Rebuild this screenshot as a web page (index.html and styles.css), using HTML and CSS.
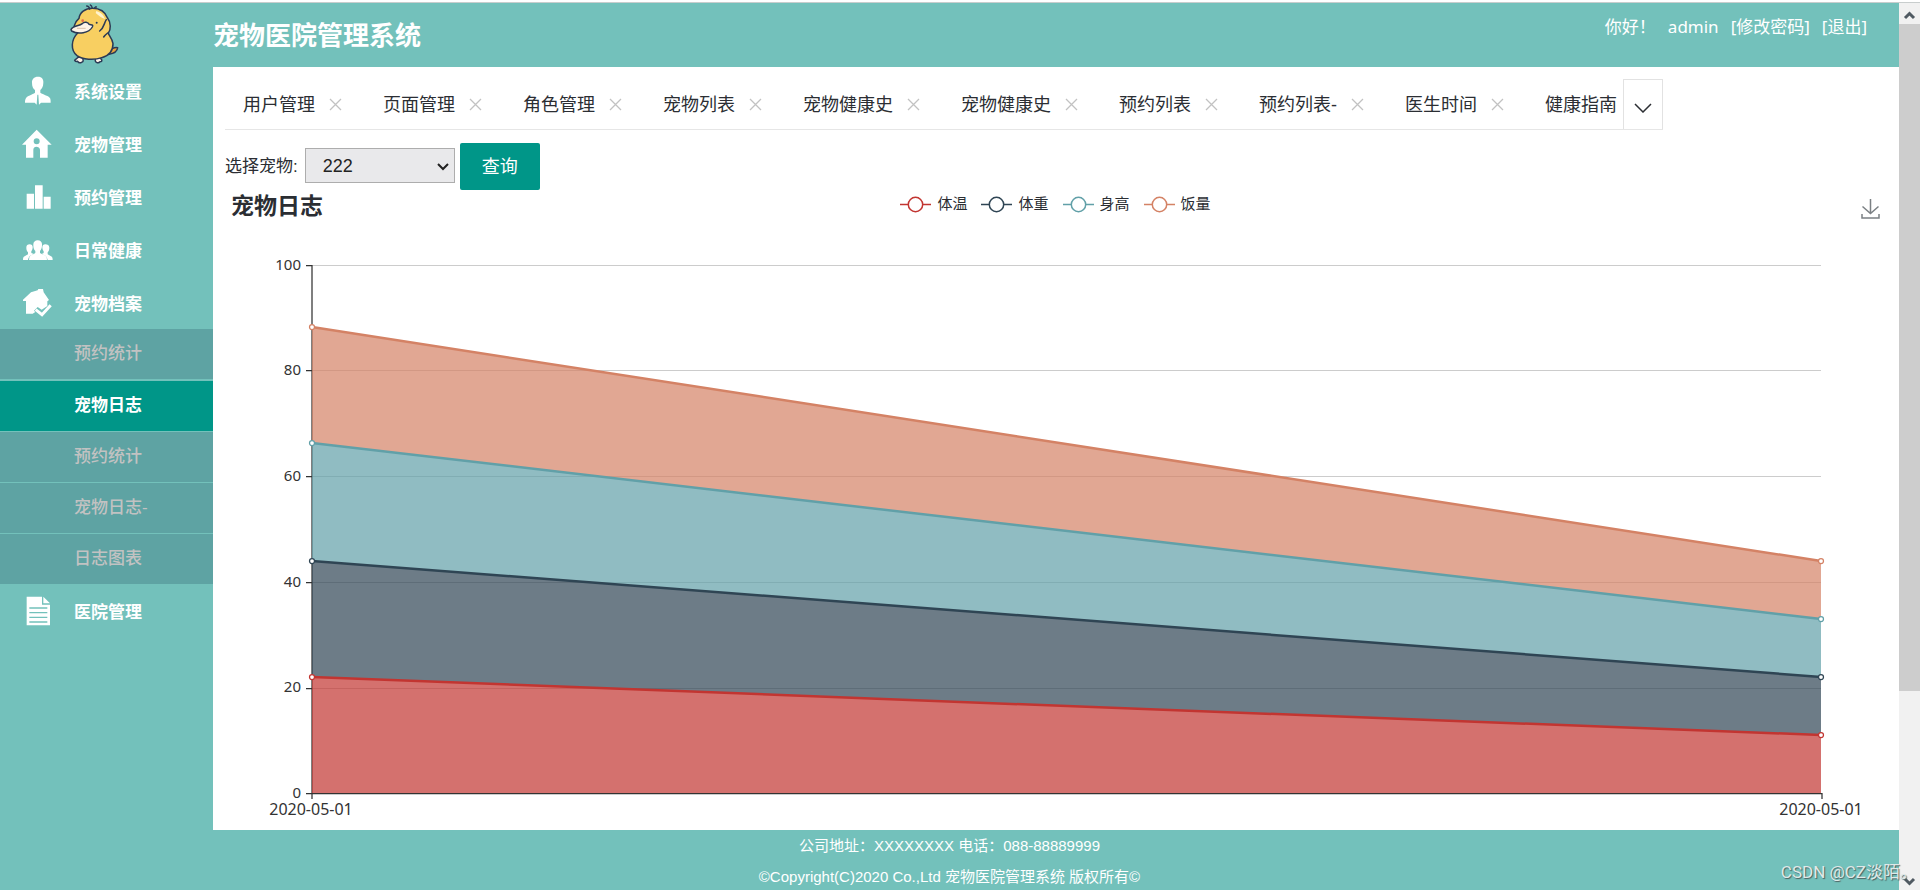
FILE: index.html
```html
<!DOCTYPE html>
<html lang="zh-CN">
<head>
<meta charset="utf-8">
<title>宠物医院管理系统</title>
<link rel="stylesheet" href="styles.css">
</head>
<body>
<div class="window">
  <div class="page">
    <div class="frame">
      <aside class="sidebar">
        <div class="logo">
          <svg viewBox="30 8 156 186" width="52" height="62" aria-label="logo">
            <g stroke="#2b3a55" stroke-width="4.500" stroke-linejoin="round" stroke-linecap="round">
              <path d="M146 154 Q162 140 176 142 Q174 158 150 162 Z" fill="#e8a33c"/>
              <path d="M66 168 Q56 170 47 180 Q50 185 56 183 Q60 190 68 186 Q76 184 70 172 Z" fill="#fff3e6"/>
              <path d="M110 174 Q106 184 114 187 Q120 189 123 184 Q130 184 128 178 Q122 170 114 170 Z" fill="#fff3e6"/>
              <path d="M56 98 C36 118 34 150 54 166 C70 178 106 180 128 172 C150 166 162 150 162 130 C160 114 148 104 148 98 C156 88 156 66 146 54 C138 32 118 24 100 24 C78 24 62 36 60 54 C46 66 42 84 48 92" fill="#f8cf61"/>
              <path d="M92 26 Q90 17 83 17 M100 24 Q98 15 94 14 M106 24 Q110 18 112 20" fill="none"/>
              <path d="M36 88 C40 76 60 78 70 70 C76 62 88 66 90 72 C98 74 104 72 100 80 C90 98 58 104 38 92 Z" fill="#fff3e6"/>
              <path d="M142 58 C134 70 136 82 122 92 M146 98 Q138 104 134 110" fill="none"/>
            </g>
            <path d="M112 32 Q132 38 138 56 Q128 54 110 38 Z" fill="#fff3cf"/>
            <circle cx="71" cy="61" r="4" fill="#e36b4a"/>
            <circle cx="113" cy="67" r="3" fill="#2b3a55"/>
            <path d="M54 84 L80 84" stroke="#c9a98c" stroke-width="2"/>
          </svg>
        </div>
        <nav class="menu">
          <a class="menu-item" href="#">
            <svg class="menu-icon" viewBox="0 0 90 90"><path fill="#fff" d="M48 2c12 0 17 8 16 18 0 12-5 18-9 22v8c8 6 27 9 30 18 1 4 1 8 1 12H57l-6 6-2-30h-3l-2 30-6-6H9c0-4 0-8 2-12 3-9 21-12 28-18v-8c-5-4-9-10-9-22C29 10 36 2 48 2z"/></svg>
            <span>系统设置</span>
          </a>
          <a class="menu-item" href="#">
            <svg class="menu-icon" viewBox="0 0 90 90"><path fill="#fff" fill-rule="evenodd" d="M44 2L0 47h12v39h22V62c0-6 4-9 9-9s11 3 11 9v24h23V47h12zM44 28a9 9 0 1 1 0 18 9 9 0 0 1 0-18z"/></svg>
            <span>宠物管理</span>
          </a>
          <a class="menu-item" href="#">
            <svg class="menu-icon" viewBox="0 0 90 90"><path fill="#fff" d="M14 35h22v45H14zM39 10h23v70H39zM65 44h21v36H65z"/></svg>
            <span>预约管理</span>
          </a>
          <a class="menu-item" href="#">
            <svg class="menu-icon" viewBox="0 0 90 90"><g fill="#fff"><path d="M47 16c9 0 14 6 13 15 0 9-3 13-6 17v6c6 4 18 6 20 13l1 8H21l1-8c2-7 13-9 18-13v-6c-4-4-6-8-6-17-1-9 5-15 13-15z"/><path d="M23 28c6 0 9 4 9 9 0 6-2 10-4 12v5l8 3c-10 4-16 7-18 18H3c0-6 1-9 5-11l10-6v-6c-3-3-5-7-5-14s4-10 10-10zM70 28c-6 0-9 4-9 9 0 6 2 10 4 12v5l-6 3c10 4 16 7 18 18h15c0-6-1-9-5-11l-10-6v-6c3-3 5-7 5-14s-6-10-12-10z"/></g></svg>
            <span>日常健康</span>
          </a>
          <a class="menu-item" href="#">
            <svg class="menu-icon" viewBox="0 0 90 90"><path fill="#fff" d="M3 35l24-22 20-6 2-4h14l2 10 16 23-5 4v14L59 65l-12-8-11 11 4 4-8 5H12V39H3z"/><path fill="none" stroke="#fff" stroke-width="9" d="M41 65l19 15 26-28"/></svg>
            <span>宠物档案</span>
          </a>
          <div class="submenu">
            <a class="sub-item" href="#">预约统计</a>
            <a class="sub-item active" href="#">宠物日志</a>
            <a class="sub-item" href="#">预约统计</a>
            <a class="sub-item" href="#">宠物日志-</a>
            <a class="sub-item" href="#">日志图表</a>
          </div>
          <a class="menu-item" href="#">
            <svg class="menu-icon" viewBox="0 0 90 90"><path fill="#fff" d="M14 2h46v24h24v62H14zM64 2l20 20H64z"/><path stroke="#73c1bb" stroke-width="4" d="M22 36h54M22 50h54M22 64h54M22 78h54"/></svg>
            <span>医院管理</span>
          </a>
        </nav>
      </aside>
      <div class="main">
        <header class="topbar">
          <h1>宠物医院管理系统</h1>
          <div class="user">
            <span class="hello">你好！</span>
            <span>admin</span>
            <a href="#">[修改密码]</a>
            <a href="#">[退出]</a>
          </div>
        </header>
        <main class="content">
          <div class="tabs">
            <ul class="tab-list">
              <li class="tab">用户管理<button class="close" aria-label="关闭"><svg viewBox="0 0 13 13"><path d="M1 1l11 11M12 1L1 12"/></svg></button></li>
              <li class="tab">页面管理<button class="close" aria-label="关闭"><svg viewBox="0 0 13 13"><path d="M1 1l11 11M12 1L1 12"/></svg></button></li>
              <li class="tab">角色管理<button class="close" aria-label="关闭"><svg viewBox="0 0 13 13"><path d="M1 1l11 11M12 1L1 12"/></svg></button></li>
              <li class="tab">宠物列表<button class="close" aria-label="关闭"><svg viewBox="0 0 13 13"><path d="M1 1l11 11M12 1L1 12"/></svg></button></li>
              <li class="tab">宠物健康史<button class="close" aria-label="关闭"><svg viewBox="0 0 13 13"><path d="M1 1l11 11M12 1L1 12"/></svg></button></li>
              <li class="tab">宠物健康史<button class="close" aria-label="关闭"><svg viewBox="0 0 13 13"><path d="M1 1l11 11M12 1L1 12"/></svg></button></li>
              <li class="tab">预约列表<button class="close" aria-label="关闭"><svg viewBox="0 0 13 13"><path d="M1 1l11 11M12 1L1 12"/></svg></button></li>
              <li class="tab">预约列表-<button class="close" aria-label="关闭"><svg viewBox="0 0 13 13"><path d="M1 1l11 11M12 1L1 12"/></svg></button></li>
              <li class="tab">医生时间<button class="close" aria-label="关闭"><svg viewBox="0 0 13 13"><path d="M1 1l11 11M12 1L1 12"/></svg></button></li>
              <li class="tab">健康指南</li>
            </ul>
            <button class="more" aria-label="更多"><svg viewBox="0 0 18 10" width="18" height="10"><path d="M1 1l8 8 8-8" fill="none" stroke="#2b2e33" stroke-width="1.500"/></svg></button>
          </div>
          <form class="filter">
            <label for="pet">选择宠物:</label>
            <span class="select-wrap">
              <select id="pet"><option>222</option></select>
              <svg class="caret" viewBox="0 0 12 8" width="12" height="8"><path d="M1 1l5 5 5-5" fill="none" stroke="#222" stroke-width="2"/></svg>
            </span>
            <button type="button" class="query">查询</button>
          </form>
          <section class="chart">
            <div class="chart-head">
              <h2>宠物日志</h2>
              <ul class="legend">
                <li><svg viewBox="0 0 31 17"><path d="M0 8.500h8M23 8.500h8" stroke="#c23531"/><circle cx="15.500" cy="8.500" r="7.200" stroke="#c23531"/></svg>体温</li>
                <li><svg viewBox="0 0 31 17"><path d="M0 8.500h8M23 8.500h8" stroke="#2f4554"/><circle cx="15.500" cy="8.500" r="7.200" stroke="#2f4554"/></svg>体重</li>
                <li><svg viewBox="0 0 31 17"><path d="M0 8.500h8M23 8.500h8" stroke="#61a0a8"/><circle cx="15.500" cy="8.500" r="7.200" stroke="#61a0a8"/></svg>身高</li>
                <li><svg viewBox="0 0 31 17"><path d="M0 8.500h8M23 8.500h8" stroke="#d48265"/><circle cx="15.500" cy="8.500" r="7.200" stroke="#d48265"/></svg>饭量</li>
              </ul>
              <button class="save" aria-label="保存为图片"><svg viewBox="0 0 19 20" width="19" height="20"><path d="M9.500 0v14M1.500 7.500l8 7 8-7M1 15v4h17v-4" fill="none" stroke="#7b8084" stroke-width="1.500"/></svg></button>
            </div>
            <svg class="plot" viewBox="0 0 1664 608">
              <g stroke="#ccc">
                <path d="M87 43.500H1596M87 148.500H1596M87 254.500H1596M87 360.500H1596M87 466.500H1596"/>
              </g>
              <g stroke="#333" stroke-width="1.250">
                <path d="M87 43V572M81 43.500h6M81 148.500h6M81 254.500h6M81 360.500h6M81 466.500h6M81 571.500H1597M87 571v6M1597 571v6"/>
              </g>
              <g fill-opacity=".7">
                <path fill="#c23531" d="M87 455L1596 513V571H87z"/>
                <path fill="#2f4554" d="M87 339L1596 455V513L87 455z"/>
                <path fill="#61a0a8" d="M87 221L1596 397V455L87 339z"/>
                <path fill="#d48265" d="M87 105L1596 339V397L87 221z"/>
              </g>
              <g fill="none" stroke-width="2.500">
                <path stroke="#c23531" d="M87 455L1596 513"/>
                <path stroke="#2f4554" d="M87 339L1596 455"/>
                <path stroke="#61a0a8" d="M87 221L1596 397"/>
                <path stroke="#d48265" d="M87 105L1596 339"/>
              </g>
              <g fill="#fff" stroke-width="1.250">
                <g stroke="#c23531"><circle cx="87" cy="455" r="2.500"/><circle cx="1596" cy="513" r="2.500"/></g>
                <g stroke="#2f4554"><circle cx="87" cy="339" r="2.500"/><circle cx="1596" cy="455" r="2.500"/></g>
                <g stroke="#61a0a8"><circle cx="87" cy="221" r="2.500"/><circle cx="1596" cy="397" r="2.500"/></g>
                <g stroke="#d48265"><circle cx="87" cy="105" r="2.500"/><circle cx="1596" cy="339" r="2.500"/></g>
              </g>
              <g class="axis" text-anchor="end">
                <text x="76" y="48">100</text>
                <text x="76" y="153">80</text>
                <text x="76" y="259">60</text>
                <text x="76" y="365">40</text>
                <text x="76" y="470">20</text>
                <text x="76" y="576">0</text>
              </g>
              <g class="axis dates" text-anchor="middle">
                <text x="86" y="593">2020-05-01</text>
                <text x="1596" y="593">2020-05-01</text>
              </g>
            </svg>
          </section>
        </main>
      </div>
    </div>
    <footer class="footer">
      <p>公司地址：XXXXXXXX 电话：088-88889999</p>
      <p>©Copyright(C)2020 Co.,Ltd 宠物医院管理系统 版权所有©</p>
    </footer>
  </div>
  <div class="scrollbar">
    <svg class="arrow" viewBox="0 0 21 21"><path d="M6 15l4.500-4.500L15 15" fill="none" stroke="#505a62" stroke-width="3"/></svg>
    <div class="thumb"></div>
    <svg class="arrow" viewBox="0 0 21 21"><path d="M6 8l4.500 4.500L15 8" fill="none" stroke="#505a62" stroke-width="3"/></svg>
  </div>
  <div class="watermark">CSDN @CZ淡陌。</div>
</div>
</body>
</html>
```
FILE: styles.css
```css
* { box-sizing: border-box; }
body, h1, h2, p, ul { margin: 0; padding: 0; }
ul { list-style: none; }
body {
  font-family: "Liberation Sans", "Noto Sans CJK SC", sans-serif;
  color: #2b2e33;
  background: #fff;
}
button { font: inherit; padding: 0; border: 0; background: none; cursor: pointer; }
a { color: inherit; text-decoration: none; }
svg { display: block; }

.window {
  position: relative;
  display: flex;
  min-height: 100vh;
  padding-top: 2px;
  background: #fff;
  overflow: hidden;
}
.page {
  flex: 1;
  min-width: 0;
  display: flex;
  flex-direction: column;
  background: #73c1bb;
  border-top: 1px solid #c8cdcd;
}
.frame { display: flex; }
.sidebar { flex: 0 0 213px; }
.logo { height: 61px; padding-left: 69px; }
.menu { color: #fff; font-size: 17px; }
.menu-item {
  display: flex;
  align-items: center;
  gap: 22px;
  height: 53px;
  padding-left: 22px;
  font-weight: 700;
}
.menu-item span { padding-bottom: 1px; }
.menu-icon { width: 30px; height: 30px; overflow: visible; }
.submenu { background: #5ea3a3; color: #c2c2c2; }
.sub-item {
  display: block;
  line-height: 50px;
  padding-left: 74px;
  border-bottom: 1px solid #73c1bb;
  font-weight: 500;
}
.sub-item:first-child { border-bottom-width: 2px; }
.sub-item:last-child { border-bottom: 0; }
.sub-item.active { background: #009688; color: #fff; font-weight: 700; }

.main { flex: 1; min-width: 0; display: flex; flex-direction: column; }
.topbar {
  display: flex;
  justify-content: space-between;
  align-items: flex-start;
  height: 64px;
  padding-right: 32px;
  color: #fff;
}
.topbar h1 { font-size: 26px; line-height: 66px; font-weight: 700; }
.user {
  display: flex;
  gap: 12px;
  padding-top: 12px;
  font: 17px/24px "Noto Sans", "Noto Sans CJK SC", sans-serif;
}
.content { flex: 1; background: #fff; padding: 12px 10px 0 12px; }

.tabs { display: flex; width: 1438px; max-width: 100%; border-bottom: 1px solid #e6e6e6; }
.tab-list { flex: 1; min-width: 0; display: flex; overflow: hidden; }
.tab {
  display: flex;
  align-items: center;
  flex: none;
  height: 50px;
  padding: 0 23px 2px 18px;
  font-size: 18px;
}
.close { width: 13px; height: 13px; margin: 2px 0 0 14px; }
.close svg { fill: none; stroke: #c2c2c2; stroke-width: 1.25px; }
.more {
  flex: 0 0 40px;
  display: flex;
  align-items: center;
  justify-content: center;
  padding-top: 6px;
  border: 1px solid #e2e2e2;
  border-bottom: 0;
}

.filter { display: flex; align-items: center; gap: 5px; padding-top: 13px; font-size: 17px; }
.filter label { padding: 0 2px 4px 0; }
.select-wrap { position: relative; margin-bottom: 2px; }
.filter select {
  display: block;
  appearance: none;
  width: 150px;
  height: 35px;
  padding: 0 17px;
  font: 18px "Liberation Sans", sans-serif;
  color: #222;
  background: #e9e9eb;
  border: 1px solid #adadad;
  border-radius: 0;
}
.caret { position: absolute; right: 6px; top: 15px; pointer-events: none; }
.query { width: 80px; height: 47px; padding-bottom: 3px; background: #009688; color: #fff; border-radius: 2px; font-size: 18px; }

.chart-head {
  display: grid;
  grid-template-columns: 1fr auto 1fr;
  align-items: center;
  height: 32px;
  padding: 0 9px 0 6px;
}
.chart-head h2 { font-size: 23px; line-height: 32px; }
.legend { display: flex; gap: 14px; padding-bottom: 4px; font-size: 15px; }
.legend li { display: flex; align-items: center; gap: 6px; line-height: 20px; }
.legend svg { width: 31px; height: 17px; fill: none; stroke-width: 1.5px; }
.save { justify-self: end; padding-top: 6px; }
.plot { width: 100%; height: auto; }
.axis { font: 15px "Noto Sans", sans-serif; fill: #333; }
.dates { font-size: 16px; }

.footer {
  flex: 1;
  color: #fff;
  text-align: center;
  font-size: 15px;
  line-height: 31px;
}

.scrollbar {
  flex: 0 0 21px;
  display: flex;
  flex-direction: column;
  background: #f1f1f1;
  border-top: 1px solid #c8cdcd;
}
.arrow { width: 21px; height: 21px; }
.thumb { flex: 0 0 75%; margin-bottom: auto; background: #cdcdcd; }

.watermark {
  position: absolute;
  right: 3px;
  bottom: 8px;
  font: 17px/24px Roboto, "Noto Sans CJK SC", sans-serif;
  color: #dfe9e8;
  text-shadow: 1px 1px 1px #4c5f5e;
}
```
